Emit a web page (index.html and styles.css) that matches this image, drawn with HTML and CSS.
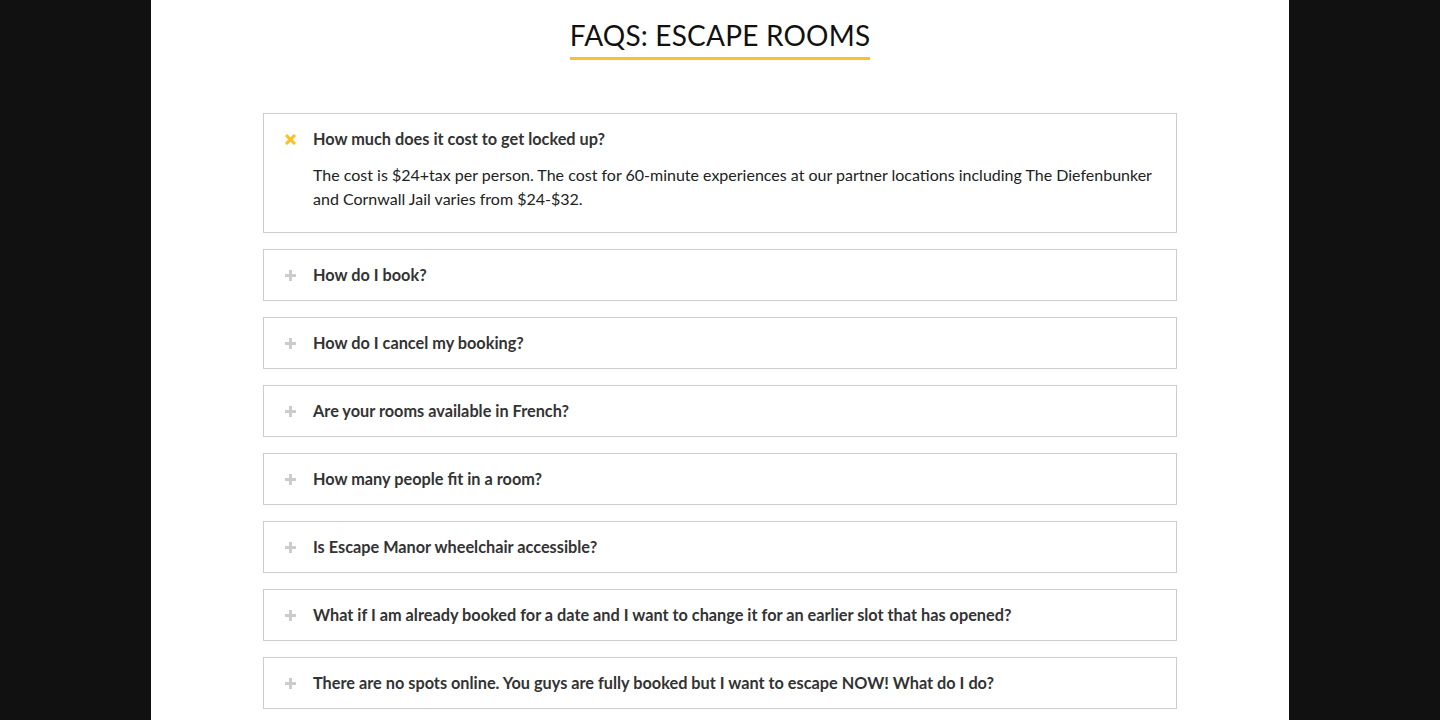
FILE: index.html
```html
<!DOCTYPE html>
<html lang="en">
<head>
<meta charset="utf-8">
<title>FAQs: Escape Rooms</title>
<link rel="stylesheet" href="styles.css">
</head>
<body>
<main class="page">
  <header class="heading">
    <h1 class="title">FAQS: ESCAPE ROOMS</h1>
  </header>
  <section class="faq-list">
    <article class="faq open">
      <div class="question">
        <span class="icon icon-close"></span>
        <span class="q-text">How much does it cost to get locked up?</span>
      </div>
      <p class="answer">The cost is $24+tax per person. The cost for 60-minute experiences at our partner locations including The Diefenbunker and Cornwall Jail varies from $24-$32.</p>
    </article>
    <article class="faq">
      <div class="question"><span class="icon icon-plus"></span><span class="q-text">How do I book?</span></div>
    </article>
    <article class="faq">
      <div class="question"><span class="icon icon-plus"></span><span class="q-text">How do I cancel my booking?</span></div>
    </article>
    <article class="faq">
      <div class="question"><span class="icon icon-plus"></span><span class="q-text">Are your rooms available in French?</span></div>
    </article>
    <article class="faq">
      <div class="question"><span class="icon icon-plus"></span><span class="q-text">How many people fit in a room?</span></div>
    </article>
    <article class="faq">
      <div class="question"><span class="icon icon-plus"></span><span class="q-text">Is Escape Manor wheelchair accessible?</span></div>
    </article>
    <article class="faq">
      <div class="question"><span class="icon icon-plus"></span><span class="q-text">What if I am already booked for a date and I want to change it for an earlier slot that has opened?</span></div>
    </article>
    <article class="faq">
      <div class="question"><span class="icon icon-plus"></span><span class="q-text">There are no spots online. You guys are fully booked but I want to escape NOW! What do I do?</span></div>
    </article>
  </section>
</main>
</body>
</html>
```
FILE: styles.css
```css
html, body {
  margin: 0;
  padding: 0;
}
body {
  background: #111111;
  font-family: Lato, "Liberation Sans", sans-serif;
  color: #222;
}
.page {
  width: 1138px;
  margin: 0 auto;
  background: #ffffff;
  min-height: 100vh;
  padding: 18px 0 40px;
  box-sizing: border-box;
}
.heading {
  display: flex;
  justify-content: center;
}
.title {
  margin: 0;
  font-size: 28px;
  font-weight: 400;
  line-height: 34px;
  letter-spacing: 0.2px;
  color: #111;
  padding-bottom: 5px;
  border-bottom: 3px solid #fbc02a;
}
.faq-list {
  width: 914px;
  margin: 53px auto 0;
  display: flex;
  flex-direction: column;
  gap: 16px;
}
.faq {
  border: 1px solid #cccccc;
  padding: 15px 20px 15px 21px;
}
.question {
  display: flex;
  align-items: center;
  gap: 17px;
  line-height: 20px;
}
.q-text {
  font-size: 16.3px;
  font-weight: 700;
  color: #333;
}
.icon {
  position: relative;
  width: 11px;
  height: 11px;
  flex: none;
}
.icon::before,
.icon::after {
  content: "";
  position: absolute;
  left: 0;
  top: 4px;
  width: 11px;
  height: 3px;
  background: #cccccc;
}
.icon::after {
  transform: rotate(90deg);
}
.icon-close::before,
.icon-close::after {
  background: #fbc02a;
  left: -1px;
  width: 13px;
  border-radius: 1px;
}
.icon-close::before {
  transform: rotate(45deg);
}
.icon-close::after {
  transform: rotate(-45deg);
}
.answer {
  margin: 14px 0 6px 28px;
  font-size: 16px;
  line-height: 24px;
  color: #222;
}
```
